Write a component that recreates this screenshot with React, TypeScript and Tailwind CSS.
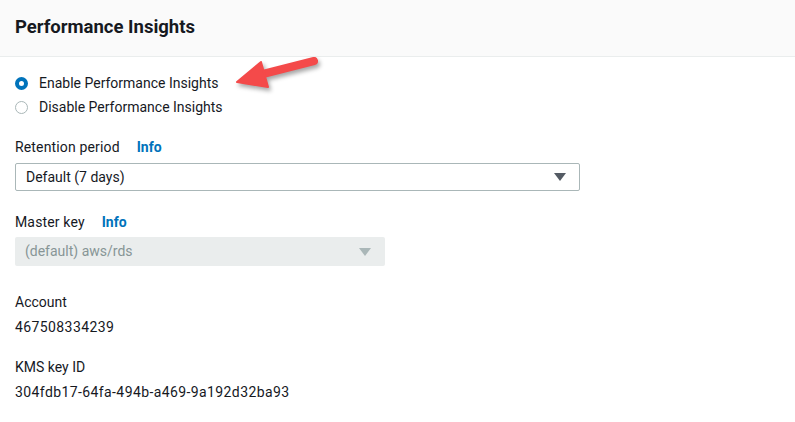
import React from 'react';

const font = { fontFamily: 'Roboto, "Noto Sans", sans-serif' };

const Caret = ({ color }: { color: string }) => (
  <svg width="12" height="8" viewBox="0 0 12 8">
    <path d="M0 0 H12 L6 8 Z" fill={color} />
  </svg>
);

const Label = ({ text, info }: { text: string; info?: boolean }) => (
  <div className="flex items-center gap-[17px] text-[14px] text-[#16191f] leading-[20px]">
    <span className="tracking-[0.15px]">{text}</span>
    {info && <span className="font-bold text-[#0073bb]">Info</span>}
  </div>
);

export default function App() {
  return (
    <div className="relative w-[795px] h-[422px] bg-white overflow-hidden" style={font}>
      <header className="h-[57px] bg-[#fafafa] border-b border-[#eaeded] flex items-center px-[15px]">
        <h1 className="text-[18.5px] font-bold text-[#16191f]">Performance Insights</h1>
      </header>

      <main className="px-[15px]">
        {/* radios */}
        <div className="pt-[16px] flex flex-col gap-[4px]">
          <label className="flex items-center gap-[11px] h-[20px]">
            <span className="w-[13px] h-[13px] rounded-full border-[4px] border-[#0073bb] bg-white" />
            <span className="text-[14px] text-[#16191f]">Enable Performance Insights</span>
          </label>
          <label className="flex items-center gap-[11px] h-[20px]">
            <span className="w-[13px] h-[13px] rounded-full border border-[#aab7b8] bg-white" />
            <span className="text-[14px] text-[#16191f]">Disable Performance Insights</span>
          </label>
        </div>

        {/* retention */}
        <div className="mt-[20px]">
          <Label text="Retention period" info />
          <div className="mt-[6px] w-[565px] h-[28px] border border-[#aab7b8] rounded-[2px] flex items-center justify-between pl-[10px] pr-[13px]">
            <span className="text-[14px] text-[#16191f]">Default (7 days)</span>
            <Caret color="#545b64" />
          </div>
        </div>

        {/* master key */}
        <div className="mt-[21px]">
          <Label text="Master key" info />
          <div className="mt-[5px] w-[370px] h-[29px] bg-[#eaeded] rounded-[2px] flex items-center justify-between pl-[10px] pr-[14px]">
            <span className="text-[14px] text-[#879596]">(default) aws/rds</span>
            <Caret color="#aab7b8" />
          </div>
        </div>

        {/* account */}
        <div className="mt-[26px] text-[14px] text-[#16191f] leading-[20px]">
          <div>Account</div>
          <div className="mt-[5px] tracking-[0.4px]">467508334239</div>
        </div>

        <div className="mt-[20px] text-[14px] text-[#16191f] leading-[20px]">
          <div>KMS key ID</div>
          <div className="mt-[5px] tracking-[0.4px]">304fdb17-64fa-494b-a469-9a192d32ba93</div>
        </div>
      </main>

      {/* annotation arrow */}
      <svg
        className="absolute left-0 top-0 pointer-events-none"
        width="795"
        height="422"
        style={{ filter: 'drop-shadow(2px 3px 2px rgba(0,0,0,0.35))' }}
      >
        <line x1="314" y1="61" x2="255" y2="76" stroke="#f44a4a" strokeWidth="8" strokeLinecap="round" />
        <path d="M237 82 L261 62 L268 87 Z" fill="#f44a4a" stroke="#f44a4a" strokeWidth="2" strokeLinejoin="round" />
      </svg>
    </div>
  );
}
